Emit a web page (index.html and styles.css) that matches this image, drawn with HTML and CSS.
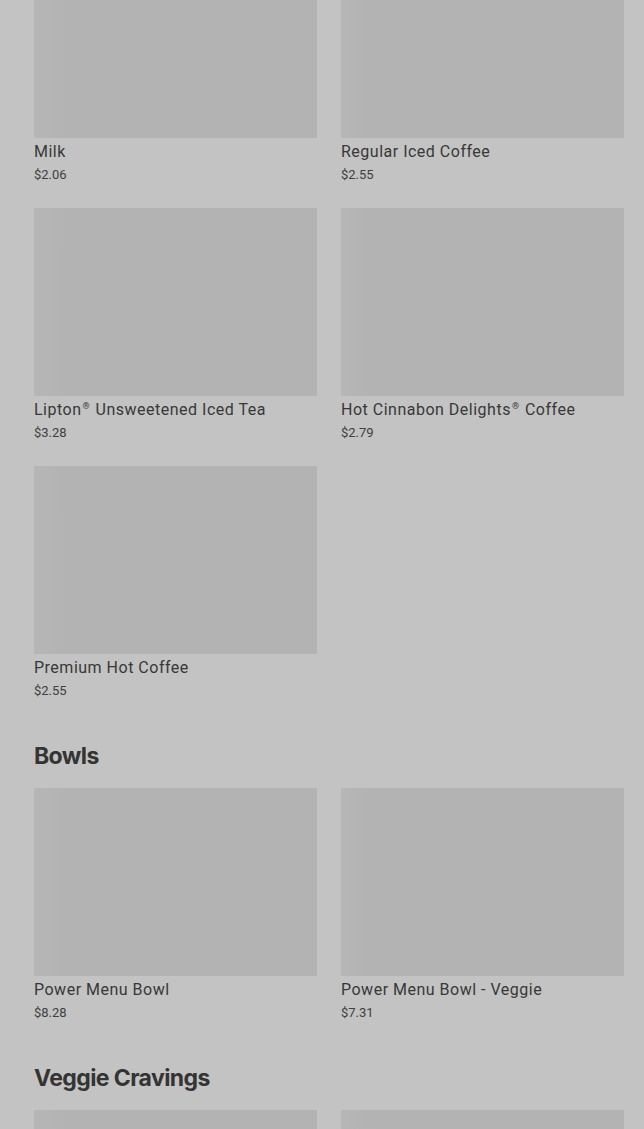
FILE: index.html
```html
<!DOCTYPE html>
<html>
<head>
<meta charset="utf-8">
<link rel="stylesheet" href="styles.css">
</head>
<body>
<main class="menu">
  <section class="section first">
    <div class="grid">
      <div class="card"><div class="thumb"></div><div class="name">Milk</div><div class="price">$2.06</div></div>
      <div class="card"><div class="thumb"></div><div class="name">Regular Iced Coffee</div><div class="price">$2.55</div></div>
      <div class="card"><div class="thumb"></div><div class="name">Lipton<sup class="reg">®</sup> Unsweetened Iced Tea</div><div class="price">$3.28</div></div>
      <div class="card"><div class="thumb"></div><div class="name">Hot Cinnabon Delights<sup class="reg">®</sup> Coffee</div><div class="price">$2.79</div></div>
      <div class="card"><div class="thumb"></div><div class="name">Premium Hot Coffee</div><div class="price">$2.55</div></div>
    </div>
  </section>
  <section class="section">
    <h2 class="heading">Bowls</h2>
    <div class="grid">
      <div class="card"><div class="thumb"></div><div class="name">Power Menu Bowl</div><div class="price">$8.28</div></div>
      <div class="card"><div class="thumb"></div><div class="name">Power Menu Bowl - Veggie</div><div class="price">$7.31</div></div>
    </div>
  </section>
  <section class="section">
    <h2 class="heading">Veggie Cravings</h2>
    <div class="grid">
      <div class="card"><div class="thumb"></div></div>
      <div class="card"><div class="thumb"></div></div>
    </div>
  </section>
</main>
</body>
</html>
```

FILE: styles.css
```css
html, body {
  margin: 0;
  padding: 0;
  background: #c3c3c3;
}
body {
  font-family: Roboto, "Liberation Sans", sans-serif;
  color: #383838;
  overflow: hidden;
  height: 1129px;
}
.menu {
  padding: 0 20px 0 34px;
}
.section.first {
  margin-top: -50px;
}
.heading {
  margin: 40px 0 16px;
  font-family: Inter, "Liberation Sans", sans-serif;
  font-weight: 700;
  font-size: 23px;
  line-height: 32px;
  letter-spacing: -0.6px;
  color: #343434;
}
.grid {
  display: grid;
  grid-template-columns: 1fr 1fr;
  column-gap: 24px;
  row-gap: 24px;
}
.thumb {
  height: 188px;
  background: linear-gradient(90deg, #b6b6b6 0, #b3b3b3 30px, #b3b3b3 100%);
}
.name {
  margin-top: 3px;
  font-size: 16px;
  line-height: 22px;
  letter-spacing: 0.5px;
  color: #383838;
}
.reg {
  font-size: 9px;
  line-height: 0;
  vertical-align: 6px;
  margin: 0 1px;
}
.price {
  padding-top: 2px;
  font-size: 13px;
  line-height: 19px;
  color: #404040;
}
```
